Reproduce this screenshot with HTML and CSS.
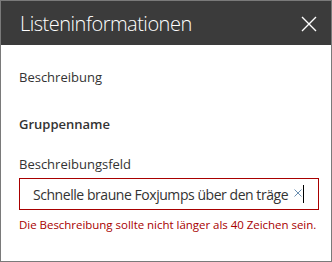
FILE: index.html
```html
<!DOCTYPE html>
<html lang="de">
<head>
<meta charset="utf-8">
<link rel="stylesheet" href="styles.css">
</head>
<body>
<div class="panel">
  <div class="header">
    <div class="title">Listeninformationen</div>
    <svg class="close" width="16" height="16" viewBox="0 0 16 16"><path d="M1 1 L15 15 M15 1 L1 15" stroke="#ffffff" stroke-width="1.4" fill="none"/></svg>
  </div>
  <div class="body">
    <div class="label">Beschreibung</div>
    <div class="group">Gruppenname</div>
    <div class="field-label">Beschreibungsfeld</div>
    <div class="input">
      <span class="value">Schnelle braune Foxjumps über den träge</span>
      <svg class="clear" width="8" height="8" viewBox="0 0 8 8"><path d="M0.5 0.5 L7.5 7.5 M7.5 0.5 L0.5 7.5" stroke="#6b8fb0" stroke-width="1" fill="none"/></svg>
      <span class="caret"></span>
    </div>
    <div class="error">Die Beschreibung sollte nicht länger als 40 Zeichen sein.</div>
  </div>
</div>
</body>
</html>
```
FILE: styles.css
```css
* { box-sizing: border-box; }
html, body { margin: 0; padding: 0; background: #ffffff; }
body { font-family: "Open Sans", "Noto Sans", "Liberation Sans", sans-serif; color: #333333; }
.panel {
  width: 332px;
  height: 262px;
  border: 1px solid #7a7a7a;
  background: #ffffff;
}
.header {
  height: 44px;
  background: #3b3b3b;
  display: flex;
  align-items: center;
  justify-content: space-between;
  padding: 0 14px 0 19px;
}
.title {
  color: #ffffff;
  font-size: 20px;
  font-weight: 300;
  letter-spacing: -0.5px;
  line-height: 28px;
  margin-top: 1px;
}
.close { display: block; margin-top: 1px; }
.body { padding: 0 12px 0 18px; }
.label {
  font-size: 13px;
  margin-top: 23px;
  line-height: 18px;
}
.group {
  font-size: 13px;
  font-weight: 600;
  margin-top: 29px;
  line-height: 18px;
}
.field-label {
  font-size: 13px;
  margin-top: 22px;
  line-height: 18px;
}
.input {
  margin-top: 5px;
  width: 300px;
  height: 32px;
  border: 1px solid #a80000;
  display: flex;
  align-items: center;
  padding-left: 13px;
}
.value {
  font-size: 14px;
  letter-spacing: -0.45px;
  color: #333333;
  white-space: nowrap;
}
.clear { margin-left: 6px; margin-top: -2px; }
.caret {
  width: 1px;
  height: 18px;
  background: #000000;
  margin-left: 1px;
}
.error {
  margin-top: 8px;
  font-size: 11.5px;
  letter-spacing: -0.03px;
  color: #a80000;
  line-height: 14px;
  white-space: nowrap;
}
```
